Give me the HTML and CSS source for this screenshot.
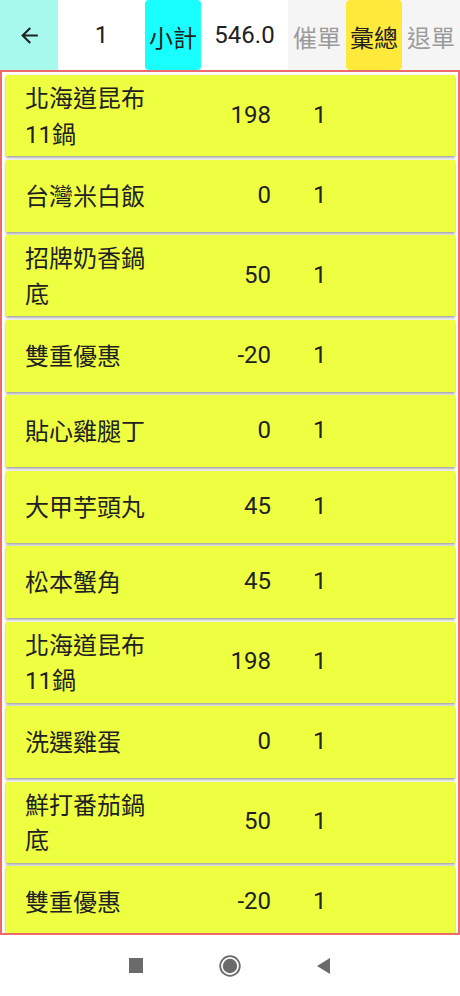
FILE: index.html
```html
<!DOCTYPE html>
<html lang="zh-Hant">
<head>
<meta charset="utf-8">
<title>Order</title>
<link rel="stylesheet" href="styles.css">
</head>
<body>
<div class="topbar">
  <div class="cell back">
    <svg class="arrow" viewBox="0 0 24 24" width="25" height="25"><path d="M20 11H7.830l5.590-5.590L12 4l-8 8 8 8 1.410-1.410L7.830 13H20v-2z" fill="#212121"/></svg>
  </div>
  <div class="cell num">1</div>
  <div class="cell btn cyan">小計</div>
  <div class="cell num">546.0</div>
  <div class="cell btn gray">催單</div>
  <div class="cell btn yellow">彙總</div>
  <div class="cell btn gray">退單</div>
</div>
<div class="list">
  <div class="card"><div class="name">北海道昆布11鍋</div><div class="price">198</div><div class="qty">1</div></div>
  <div class="card"><div class="name">台灣米白飯</div><div class="price">0</div><div class="qty">1</div></div>
  <div class="card"><div class="name">招牌奶香鍋底</div><div class="price">50</div><div class="qty">1</div></div>
  <div class="card"><div class="name">雙重優惠</div><div class="price">-20</div><div class="qty">1</div></div>
  <div class="card"><div class="name">貼心雞腿丁</div><div class="price">0</div><div class="qty">1</div></div>
  <div class="card"><div class="name">大甲芋頭丸</div><div class="price">45</div><div class="qty">1</div></div>
  <div class="card"><div class="name">松本蟹角</div><div class="price">45</div><div class="qty">1</div></div>
  <div class="card"><div class="name">北海道昆布11鍋</div><div class="price">198</div><div class="qty">1</div></div>
  <div class="card"><div class="name">洗選雞蛋</div><div class="price">0</div><div class="qty">1</div></div>
  <div class="card"><div class="name">鮮打番茄鍋底</div><div class="price">50</div><div class="qty">1</div></div>
  <div class="card"><div class="name">雙重優惠</div><div class="price">-20</div><div class="qty">1</div></div>
</div>
<div class="navbar">
  <div class="slot"><svg width="14" height="15" viewBox="0 0 14 15"><rect x="0" y="0" width="14" height="15" fill="#6b6b6b"/></svg></div>
  <div class="slot"><svg width="22" height="22" viewBox="0 0 22 22"><circle cx="11" cy="11" r="9.8" fill="none" stroke="#6b6b6b" stroke-width="1.8"/><circle cx="11" cy="11" r="7.2" fill="#6b6b6b"/></svg></div>
  <div class="slot"><svg width="14" height="16" viewBox="0 0 14 16"><polygon points="0,8 13,0 13,16" fill="#6b6b6b"/></svg></div>
</div>
</body>
</html>
```
FILE: styles.css
```css
html, body {
  margin: 0;
  padding: 0;
  background: #ffffff;
}
body {
  width: 460px;
  height: 996px;
  overflow: hidden;
  font-family: Roboto, "Noto Sans CJK TC", sans-serif;
  color: #212121;
}
.topbar {
  display: flex;
  height: 70px;
}
.cell {
  display: flex;
  align-items: center;
  justify-content: center;
  font-size: 24px;
  height: 70px;
  box-sizing: border-box;
}
.back {
  width: 58px;
  background: #a7f9ee;
}
.arrow {
  display: block;
  margin-top: 1px;
}
.num {
  width: 87px;
  background: #ffffff;
}
.btn {
  width: 56px;
  padding-top: 2px;
}
.btn.gray {
  width: 58px;
  background: #f5f5f5;
  color: #9b9b9b;
}
.btn.cyan {
  background: #19ffff;
  border-radius: 4px;
}
.btn.yellow {
  background: #ffea3b;
  border-radius: 4px;
}
.list {
  height: 865px;
  box-sizing: border-box;
  border: 2px solid #ef6a6a;
  padding: 3px 3px 0 4px;
  overflow: hidden;
}
.card {
  display: flex;
  align-items: center;
  min-height: 72px;
  box-sizing: border-box;
  padding: 3px 0;
  margin-bottom: 3.5px;
  background: #eeff41;
  box-shadow: 0 2px 2.5px rgba(0, 0, 0, 0.34), 0 0 1px rgba(0, 0, 0, 0.14);
  font-size: 24px;
  line-height: 35.5px;
}
.name {
  width: 127px;
  margin-left: 19px;
  padding-top: 4px;
}
.price {
  width: 119px;
  text-align: right;
}
.qty {
  margin-left: 42px;
}
.navbar {
  display: flex;
  justify-content: center;
  align-items: center;
  gap: 54px;
  height: 61px;
}
.slot {
  width: 40px;
  display: flex;
  justify-content: center;
  align-items: center;
}
.slot svg {
  display: block;
}
```
